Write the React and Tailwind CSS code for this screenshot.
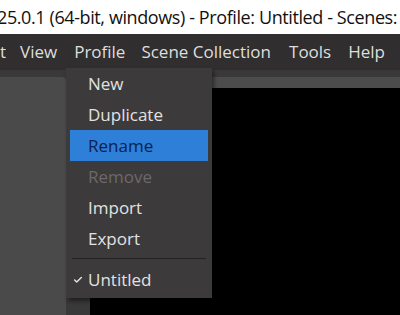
import { Check } from 'lucide-react';

const App = () => {
  return (
    <div className="w-[400px] h-[315px] overflow-hidden relative bg-[#3a3939] font-['Open_Sans',sans-serif]">
      {/* title bar */}
      <div className="h-[34px] bg-white flex items-center overflow-hidden">
        <span className="whitespace-nowrap text-[18px] text-[#111] ml-[-3px] tracking-[-0.4px]">
          25.0.1 (64-bit, windows) - Profile: Untitled - Scenes:
        </span>
      </div>

      {/* menu bar */}
      <div className="h-[36px] bg-[#302e2e] flex items-center overflow-hidden whitespace-nowrap text-[17px] text-[#dedede] pb-[1px]">
        <span className="w-[19px]">t</span>
        <span className="ml-[1px]">View</span>
        <span className="ml-[17px]">Profile</span>
        <span className="ml-[16px]">Scene Collection</span>
        <span className="ml-[18px]">Tools</span>
        <span className="ml-[17px]">Help</span>
      </div>

      {/* dock area */}
      <div className="flex pt-[7px] h-[245px]">
        <div className="w-[66px] bg-[#4a4a4a] rounded-tr-[4px]" />
        <div className="w-[24px]" />
        <div className="flex-1 flex flex-col">
          <div className="h-[11px] bg-[#4c4c4c]" />
          <div className="flex-1 bg-black" />
        </div>
      </div>

      {/* dropdown */}
      <div className="absolute left-[66px] top-[68px] w-[146px] bg-[#3c3a3a] pb-[1px] px-[4px] shadow-[2px_3px_4px_rgba(0,0,0,0.45)] text-[17px] text-[#e2e2e2]">
        <div className="h-[31px] flex items-center pl-[18px]">New</div>
        <div className="h-[31px] flex items-center pl-[18px]">Duplicate</div>
        <div className="h-[31px] flex items-center pl-[18px] bg-[#2d7fd8] text-[#0b2250]">Rename</div>
        <div className="h-[31px] flex items-center pl-[18px] text-[#6b6969]">Remove</div>
        <div className="h-[31px] flex items-center pl-[18px]">Import</div>
        <div className="h-[31px] flex items-center pl-[18px]">Export</div>
        <div className="h-[8px] flex items-center px-[2px]">
          <div className="h-px w-full bg-[#242323]" />
        </div>
        <div className="h-[35px] flex items-center relative pl-[18px]">
          <Check className="absolute left-[3px] w-[10px] h-[10px]" strokeWidth={3.5} color="#e2e2e2" />
          Untitled
        </div>
      </div>
    </div>
  );
};

export default App;
